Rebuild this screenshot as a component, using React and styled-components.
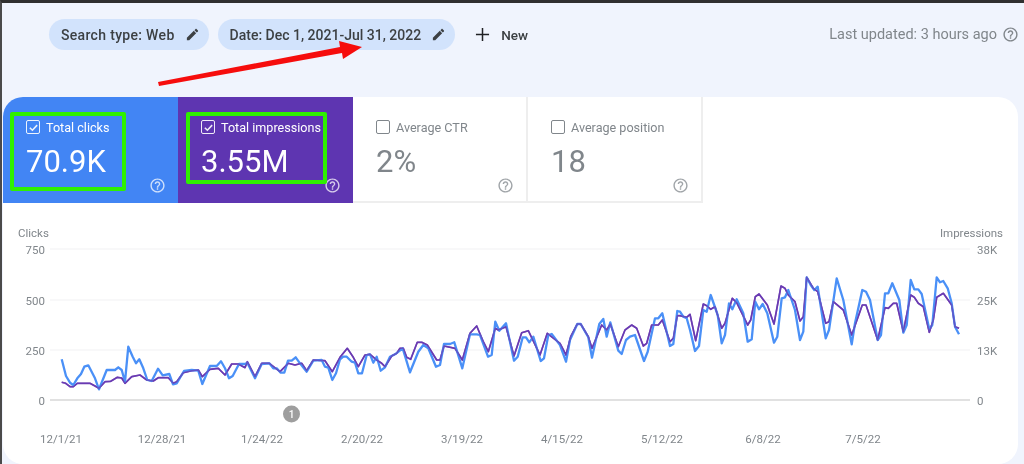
import React from 'react'
import styled, { createGlobalStyle } from 'styled-components'

const GlobalStyle = createGlobalStyle`
  html, body { margin: 0; padding: 0; background: #f0f4fd; }
  body { font-family: Roboto, "Liberation Sans", sans-serif; }
`

const toPoints = (list, offset) => {
  const out = []
  for (let i = 0; i < list.length; i += 2) {
    out.push(`${(offset + list[i] / 3).toFixed(1)},${(220 + list[i + 1] / 3).toFixed(1)}`)
  }
  return out.join(' ')
}

// traced from the chart, three stretches in 3x coords
const blueA = [185,418,198,468,210,488,220,495,232,475,243,462,253,440,265,436,285,475,297,508,320,450,345,450,355,442,365,450,375,485,385,380,398,410,408,430,418,418,430,445,442,480,455,483,474,446,488,466,508,462,519,493,530,490,552,453,575,450,595,452,607,492,630,438,650,438,663,424,675,445,687,475,698,468,717,432,735,432,742,428,765,475,785,432,808,430,820,445,830,445,842,458,853,458,864,422,875,422,887,412,900,430,920,455,940,422,965,420,975,440,985,443,997,480,1008,460,1020,418]
const blueB = [0,418,10,410,20,410,35,425,45,428,55,460,66,460,80,405,90,403,100,428,110,410,122,452,135,442,150,410,165,403,188,385,210,457,235,395,250,375,265,385,288,440,300,435,312,372,330,372,343,367,367,445,390,343,410,343,420,345,444,410,455,405,466,305,478,332,498,310,522,422,533,410,548,352,558,352,568,367,580,350,602,423,612,415,625,345,635,342,660,375,678,425,690,360,712,312,722,312,745,352,756,413,778,312,790,297,800,350,811,307,835,392,845,402,858,360,870,350,885,345,912,423,923,395,945,295,955,295,967,280,990,378,1000,372,1012,273,1020,275]
const blueC = [0,275,10,290,20,295,30,330,45,393,57,378,70,270,80,275,92,225,113,285,125,370,135,345,147,250,157,268,170,238,190,280,203,365,215,358,226,245,237,268,248,252,262,280,282,368,292,350,305,235,315,232,325,210,345,270,360,360,370,335,380,172,392,195,403,210,413,200,437,355,447,330,470,175,490,240,515,373,525,310,547,210,558,215,570,240,593,360,603,345,615,220,625,220,637,190,658,240,670,338,680,315,692,180,703,208,715,208,725,222,748,328,757,315,770,172,780,187,790,183,803,205,815,250,825,320,837,343]

const purpleA = [185,487,197,490,210,500,220,500,232,490,270,490,285,498,297,505,315,485,332,484,352,472,365,474,375,490,395,470,420,465,440,480,460,483,475,473,505,473,520,490,530,485,550,458,575,452,595,450,607,470,630,448,655,445,675,465,695,432,715,432,735,443,742,425,765,470,785,430,808,430,840,455,865,430,885,435,905,430,920,452,940,420,975,422,997,455,1020,412]
const purpleB = [0,412,22,385,40,412,55,440,75,405,90,403,110,420,125,430,135,440,155,408,170,400,180,385,190,385,200,412,212,418,232,367,245,367,262,375,290,420,300,420,312,378,345,385,367,420,390,340,410,318,430,365,445,395,466,325,475,330,498,320,522,408,545,338,565,332,600,405,622,340,660,370,678,405,692,350,712,312,722,312,745,350,756,385,785,315,800,330,811,312,835,380,855,330,875,315,890,325,910,378,920,370,935,315,955,315,967,300,990,365,1000,355,1012,287,1020,287]
const purpleC = [0,287,20,292,30,283,47,362,70,252,80,257,92,268,105,260,125,325,135,310,157,235,170,248,203,315,212,300,226,230,237,222,262,255,282,312,303,198,315,205,325,225,345,245,360,303,370,290,380,172,400,205,413,215,437,310,447,305,460,245,490,270,515,345,547,255,558,255,593,360,615,263,625,265,640,250,650,250,670,335,692,225,703,232,715,250,730,260,748,337,760,300,770,232,790,220,815,255,825,320,837,325]

const bluePoints = [toPoints(blueA, 0), toPoints(blueB, 340), toPoints(blueC, 680)].join(' ')
const purplePoints = [toPoints(purpleA, 0), toPoints(purpleB, 340), toPoints(purpleC, 680)].join(' ')

const grid = [
  { y: 249, left: '750', right: '38K' },
  { y: 300, left: '500', right: '25K' },
  { y: 350, left: '250', right: '13K' },
]
const dates = [
  [61, '12/1/21'], [162, '12/28/21'], [262, '1/24/22'], [362, '2/20/22'], [462, '3/19/22'],
  [562, '4/15/22'], [662, '5/12/22'], [763, '6/8/22'], [863, '7/5/22'],
]

const tiles = [
  { label: 'Total clicks', value: '70.9K', color: '#4285f4', checked: true },
  { label: 'Total impressions', value: '3.55M', color: '#5e35b1', checked: true },
  { label: 'Average CTR', value: '2%' },
  { label: 'Average position', value: '18' },
]

function EditIcon() {
  return (
    <ChipIcon viewBox="0 0 24 24">
      <path d="M3 17.25V21h3.75L17.81 9.94l-3.75-3.75L3 17.25zM20.71 7.04c.39-.39.39-1.02 0-1.41l-2.34-2.34c-.39-.39-1.02-.39-1.41 0l-1.83 1.83 3.75 3.75 1.83-1.83z" />
    </ChipIcon>
  )
}

function HelpIcon() {
  return (
    <HelpSvg viewBox="0 0 24 24">
      <path d="M11 18h2v-2h-2v2zm1-16C6.48 2 2 6.48 2 12s4.48 10 10 10 10-4.48 10-10S17.52 2 12 2zm0 18c-4.41 0-8-3.59-8-8s3.59-8 8-8 8 3.59 8 8-3.59 8-8 8zm0-14c-2.21 0-4 1.79-4 4h2c0-1.1.9-2 2-2s2 .9 2 2c0 2-3 1.75-3 5h2c0-2.25 3-2.5 3-5 0-2.21-1.79-4-4-4z" />
    </HelpSvg>
  )
}

function Tile({ label, value, color, checked }) {
  return (
    <TileBox $color={color}>
      <TileHead>
        <Check $checked={checked}>
          {checked && (
            <svg viewBox="0 0 12 12" width="11" height="11">
              <path d="M2 6.2 4.8 9 10 3.4" fill="none" stroke="currentColor" strokeWidth="1.7" />
            </svg>
          )}
        </Check>
        <TileLabel>{label}</TileLabel>
      </TileHead>
      <TileValue>{value}</TileValue>
      <TileHelp><HelpIcon /></TileHelp>
    </TileBox>
  )
}

function Chart() {
  return (
    <ChartSvg viewBox="3 203 1015 257">
      {grid.map((g) => (
        <line key={g.y} x1="50" x2="970" y1={g.y} y2={g.y} stroke="#f1f2f3" strokeWidth="1.2" />
      ))}
      <line x1="50" x2="970" y1="400" y2="400" stroke="#c4c4c4" strokeWidth="1.2" />
      <polyline points={purplePoints} fill="none" stroke="#6a3ab2" strokeWidth="1.7" strokeLinejoin="round" />
      <polyline points={bluePoints} fill="none" stroke="#4a90f7" strokeWidth="2.3" strokeLinejoin="round" />
      <polyline points={purplePoints} fill="none" stroke="#6a3ab2" strokeWidth="1.5" strokeLinejoin="round" opacity="0.7" />
      <AxisText x="18" y="237">Clicks</AxisText>
      <AxisText x="1003" y="237" textAnchor="end">Impressions</AxisText>
      {grid.map((g) => (
        <React.Fragment key={g.left}>
          <AxisText x="45" y={g.y + 5} textAnchor="end">{g.left}</AxisText>
          <AxisText x="977" y={g.y + 5}>{g.right}</AxisText>
        </React.Fragment>
      ))}
      <AxisText x="45" y="405" textAnchor="end">0</AxisText>
      <AxisText x="977" y="405">0</AxisText>
      {dates.map(([x, text]) => (
        <AxisText key={text} x={x} y="443" textAnchor="middle">{text}</AxisText>
      ))}
      <circle cx="291.5" cy="414" r="8.5" fill="#9e9e9e" />
      <text x="291.5" y="418" textAnchor="middle" fontSize="10" fontWeight="500" fill="#fff">1</text>
    </ChartSvg>
  )
}

export default function App() {
  return (
    <>
      <GlobalStyle />
      <Page>
        <Header>
          <Chip $spacing={0.32}>Search type: Web<EditIcon /></Chip>
          <Chip>Date: Dec 1, 2021-Jul 31, 2022<EditIcon /></Chip>
          <NewButton>
            <PlusIcon viewBox="0 0 16 16">
              <path d="M8 1v14M1 8h14" fill="none" stroke="currentColor" strokeWidth="1.6" />
            </PlusIcon>
            New
          </NewButton>
          <Updated>Last updated: 3 hours ago<HelpIcon /></Updated>
        </Header>
        <Card>
          <Tiles>
            {tiles.map((t) => <Tile key={t.label} {...t} />)}
          </Tiles>
          <Chart />
        </Card>
        <Highlight $left={10} $width={116} $height={79} />
        <Highlight $left={186} $width={141} $height={72} />
        <Arrow viewBox="0 0 1024 100">
          <polygon points="158,82 340,47 339,41 362,47 343,59 342,53 159,86" fill="#f60d0d" />
        </Arrow>
      </Page>
    </>
  )
}

const Page = styled.div`
  position: relative;
  width: 1024px;
  height: 464px;
  box-sizing: border-box;
  overflow: hidden;
  background: #f0f4fd;
  border-top: 3px solid #303030;
  border-left: 2px solid #4a4a4a;
  filter: blur(0.5px);
`
const Header = styled.div`
  display: flex;
  align-items: center;
  height: 94px;
  box-sizing: border-box;
  padding: 16px 5px 47px 47px;
`
const Chip = styled.div`
  display: flex;
  align-items: center;
  height: 31px;
  padding: 0 9px 0 12px;
  margin-right: 9px;
  gap: 10px;
  border-radius: 16px;
  background: #d2e3fc;
  color: #3c4043;
  font-size: 14px;
  font-weight: 500;
  letter-spacing: ${(p) => p.$spacing || 0}px;
  white-space: nowrap;
`
const ChipIcon = styled.svg`
  width: 15px;
  height: 15px;
  fill: #3c4043;
`
const NewButton = styled.div`
  display: flex;
  align-items: center;
  margin-left: 11px;
  gap: 11px;
  font-size: 13.5px;
  font-weight: 500;
  color: #3c4043;
`
const PlusIcon = styled.svg`
  width: 15px;
  height: 15px;
  color: #202124;
`
const Updated = styled.div`
  display: flex;
  align-items: center;
  gap: 5px;
  margin-left: auto;
  font-size: 14.5px;
  color: #80868b;
`
const HelpSvg = styled.svg`
  width: 17px;
  height: 17px;
  fill: currentColor;
`
const Card = styled.div`
  margin: 0 6px 0 1px;
  height: 367px;
  background: #fff;
  border-radius: 20px;
  overflow: hidden;
`
const Tiles = styled.div`
  display: flex;
  height: 106px;
`
const TileBox = styled.div`
  display: flex;
  flex-direction: column;
  width: 175px;
  height: 106px;
  box-sizing: border-box;
  padding: 23px 12px 0 23px;
  background: ${(p) => p.$color || '#fff'};
  color: ${(p) => (p.$color ? '#fff' : '#80868b')};
  border-bottom: ${(p) => (p.$color ? 'none' : '2px solid #eeeeee')};
  border-right: ${(p) => (p.$color ? 'none' : '2px solid #eeeeee')};
`
const TileHead = styled.div`
  display: flex;
  align-items: center;
  gap: 6px;
  height: 14px;
`
const Check = styled.span`
  display: flex;
  align-items: center;
  justify-content: center;
  width: 14px;
  height: 14px;
  box-sizing: border-box;
  border: 1.5px solid currentColor;
  border-radius: 2px;
  opacity: ${(p) => (p.$checked ? 0.9 : 1)};
`
const TileLabel = styled.span`
  font-size: 12.6px;
  white-space: nowrap;
`
const TileValue = styled.div`
  margin-top: 10px;
  font-size: 31px;
  line-height: 36px;
`
const TileHelp = styled.div`
  display: flex;
  justify-content: flex-end;
  margin-top: -3px;
  opacity: 0.75;
`
const ChartSvg = styled.svg`
  display: block;
  width: 1015px;
  height: 257px;
`
const AxisText = styled.text`
  font-size: 11.5px;
  fill: #80868b;
`
const Highlight = styled.div`
  position: absolute;
  top: 109px;
  left: ${(p) => p.$left - 2}px;
  width: ${(p) => p.$width}px;
  height: ${(p) => p.$height}px;
  box-sizing: border-box;
  border: 4.5px solid #2ff000;
  border-radius: 2px;
`
const Arrow = styled.svg`
  position: absolute;
  top: -3px;
  left: -2px;
  width: 1024px;
  height: 100px;
  pointer-events: none;
`
